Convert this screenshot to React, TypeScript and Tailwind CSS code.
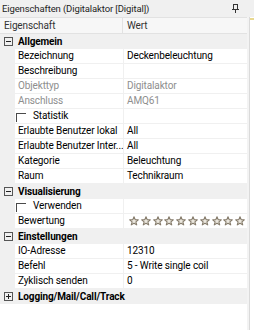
import React from "react";

type Row =
  | { kind: "cat"; label: string; open: boolean }
  | { kind: "prop"; label: string; value?: string; muted?: boolean }
  | { kind: "check"; label: string }
  | { kind: "stars"; label: string };

const rows: Row[] = [
  { kind: "cat", label: "Allgemein", open: true },
  { kind: "prop", label: "Bezeichnung", value: "Deckenbeleuchtung" },
  { kind: "prop", label: "Beschreibung", value: "" },
  { kind: "prop", label: "Objekttyp", value: "Digitalaktor", muted: true },
  { kind: "prop", label: "Anschluss", value: "AMQ61", muted: true },
  { kind: "check", label: "Statistik" },
  { kind: "prop", label: "Erlaubte Benutzer lokal", value: "All" },
  { kind: "prop", label: "Erlaubte Benutzer Inter...", value: "All" },
  { kind: "prop", label: "Kategorie", value: "Beleuchtung" },
  { kind: "prop", label: "Raum", value: "Technikraum" },
  { kind: "cat", label: "Visualisierung", open: true },
  { kind: "check", label: "Verwenden" },
  { kind: "stars", label: "Bewertung" },
  { kind: "cat", label: "Einstellungen", open: true },
  { kind: "prop", label: "IO-Adresse", value: "12310" },
  { kind: "prop", label: "Befehl", value: "5 - Write single coil" },
  { kind: "prop", label: "Zyklisch senden", value: "0" },
  { kind: "cat", label: "Logging/Mail/Call/Track", open: false },
];

function ExpandBox({ open }: { open: boolean }) {
  return (
    <svg width="9" height="9" viewBox="0 0 9 9" className="shrink-0">
      <rect x="0.5" y="0.5" width="8" height="8" fill="none" stroke="#555" />
      <line x1="2" y1="4.5" x2="7" y2="4.5" stroke="#222" />
      {!open && <line x1="4.5" y1="2" x2="4.5" y2="7" stroke="#222" />}
    </svg>
  );
}

function Star() {
  return (
    <svg width="10" height="10" viewBox="0 0 10 10" className="shrink-0">
      <polygon
        points="5,0.8 6.2,3.6 9.3,3.8 6.9,5.8 7.7,8.9 5,7.2 2.3,8.9 3.1,5.8 0.7,3.8 3.8,3.6"
        fill="#ebe7de"
        stroke="#857b6b"
        strokeWidth="1.1"
        strokeLinejoin="round"
      />
    </svg>
  );
}

function Checkbox() {
  return <span className="block w-[10px] h-[9px] border-t border-l border-[#4a4a4a] shrink-0" />;
}

function GridRow({ row }: { row: Row }) {
  if (row.kind === "cat") {
    return (
      <div className="h-[15px] flex items-center bg-[#f0f0f0]">
        <div className="w-[15px] flex justify-center pl-px">
          <ExpandBox open={row.open} />
        </div>
        <span className="pl-[3px] font-bold text-black">{row.label}</span>
      </div>
    );
  }
  return (
    <div className="h-[15px] flex pl-[15px] bg-[#f0f0f0]">
      <div className="w-[108px] h-[14px] bg-white flex items-center pl-[3px] whitespace-nowrap overflow-hidden">
        {row.kind === "check" ? (
          <>
            <span className="-ml-[2px] mt-[2px]">
              <Checkbox />
            </span>
            <span className="pl-[7px] text-black">{row.label}</span>
          </>
        ) : (
          <span className={row.kind === "prop" && row.muted ? "text-[#8e8e8e]" : "text-black"}>
            {row.label}
          </span>
        )}
      </div>
      <div className="w-px" />
      <div className="flex-1 h-[14px] bg-white flex items-center pl-[3px] whitespace-nowrap overflow-hidden">
        {row.kind === "prop" && (
          <span className={row.muted ? "text-[#8e8e8e]" : "text-black"}>{row.value}</span>
        )}
        {row.kind === "stars" && (
          <div className="flex gap-[1.8px] pl-[2px]">
            {Array.from({ length: 10 }).map((_, i) => (
              <Star key={i} />
            ))}
          </div>
        )}
      </div>
    </div>
  );
}

export default function App() {
  return (
    <div
      className="w-[254px] h-[330px] flex bg-[#f0f0f0] text-[10px] leading-none tracking-[-0.12px] overflow-hidden"
      style={{ fontFamily: 'Roboto, "Liberation Sans", sans-serif' }}
    >
      <div className="w-[247px] flex flex-col">
        <div className="h-[17px] flex items-center pl-[2px] pr-[8px] text-[#1e1e1e] text-[9.5px]">
          <span className="flex-1 whitespace-nowrap">Eigenschaften (Digitalaktor [Digital])</span>
          <svg width="7" height="9" viewBox="0 0 7 9">
            <rect x="1.5" y="0.5" width="4" height="5" fill="none" stroke="#333" />
            <line x1="0" y1="5.5" x2="7" y2="5.5" stroke="#333" />
            <line x1="3.5" y1="6" x2="3.5" y2="9" stroke="#333" />
          </svg>
        </div>
        <div className="flex-1 flex flex-col bg-white">
          <div className="h-[17px] flex border-y border-[#e2e2e2] bg-[#f7f7f7] text-[#333]">
            <div className="w-[123px] flex items-center pl-[4px] border-r border-[#e2e2e2]">Eigenschaft</div>
            <div className="flex-1 flex items-center pl-[4px]">Wert</div>
          </div>
          {rows.map((r, i) => (
            <GridRow key={i} row={r} />
          ))}
        </div>
      </div>
      <div className="w-[3px] bg-[#f3f3f3] border-r border-[#dadada] mt-[17px]" />
      <div className="flex-1 bg-white mt-[17px] flex flex-col">
        <div className="h-[2px] mt-px bg-[#e8d890]" />
      </div>
    </div>
  );
}
